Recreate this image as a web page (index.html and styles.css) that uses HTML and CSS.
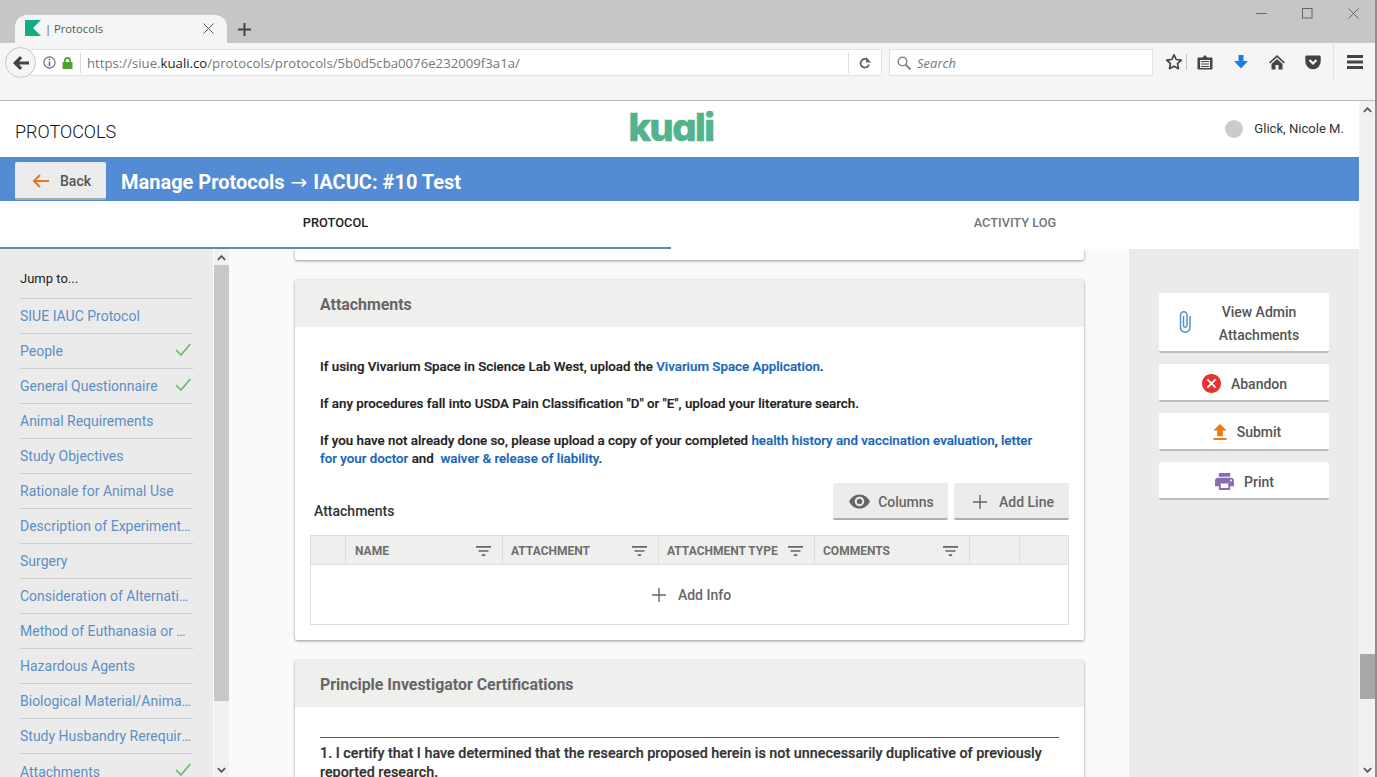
FILE: index.html
```html
<!DOCTYPE html>
<html lang="en">
<head>
<meta charset="utf-8">
<title>Protocols</title>
<link rel="stylesheet" href="styles.css">
</head>
<body>
<div class="browser">
  <div class="tabstrip">
    <div class="tab">
      <svg class="favicon" viewBox="0 0 16 16"><polygon points="0,0 16,0 8,8 16,16 0,16" fill="#12ab85"/></svg>
      <span class="tab-title">| Protocols</span>
      <svg class="tab-close" viewBox="0 0 11 11"><path d="M.5.5l10 10M10.500.5l-10 10" stroke="#555" fill="none"/></svg>
    </div>
    <svg class="tab-new" viewBox="0 0 13 13"><path d="M6.500 0v13M0 6.500h13" stroke="#444" stroke-width="2" fill="none"/></svg>
    <div class="winctl">
      <svg class="win-ico" viewBox="0 0 11 11"><path d="M0 5.500h11" stroke="#666" fill="none"/></svg>
      <svg class="win-ico" viewBox="0 0 11 11"><rect x=".5" y=".5" width="9.500" height="9.500" stroke="#666" fill="none"/></svg>
      <svg class="win-ico" viewBox="0 0 11 11"><path d="M.5.5l10 10M10.500.5l-10 10" stroke="#666" fill="none"/></svg>
    </div>
  </div>
  <div class="toolbar">
    <div class="backcircle">
      <svg class="back-ico" viewBox="0 0 16 14"><path d="M7 0l2.200 2.200L6 5.400h10v3.200H6l3.200 3.200L7 14 0 7z" fill="#444"/></svg>
    </div>
    <div class="urlbar">
      <svg class="info-ico" viewBox="0 0 14 14"><circle cx="7" cy="7" r="6" fill="none" stroke="#666" stroke-width="1.200"/><path d="M6.200 3h1.600v1.600H6.200zM6.200 6h1.600v5H6.200z" fill="#666"/></svg>
      <svg class="lock-ico" viewBox="0 0 11 12"><path d="M2 5V3.500a3.500 3.500 0 0 1 7 0V5h1.500v7H.5V5zm1.700 0h3.600V3.500a1.800 1.800 0 0 0-3.600 0z" fill="#4ea22f"/></svg>
      <span class="vsep"></span>
      <span class="url">https://siue.<b class="url-host">kuali.co</b>/protocols/protocols/5b0d5cba0076e232009f3a1a/</span>
      <span class="vsep vsep-r"></span>
      <svg class="reload-ico" viewBox="0 0 12 12"><path d="M10 7.500A4.300 4.300 0 1 1 8.700 3" fill="none" stroke="#666" stroke-width="1.800"/><path d="M7 0v5.500h5.200z" fill="#666"/></svg>
    </div>
    <div class="searchbar">
      <svg class="search-ico" viewBox="0 0 14 14"><circle cx="5.500" cy="5.500" r="4.300" fill="none" stroke="#888" stroke-width="1.600"/><path d="M8.500 8.500l5 5" stroke="#888" stroke-width="2"/></svg>
      <span class="search-text">Search</span>
    </div>
    <div class="tools">
      <svg class="tool t-star" viewBox="0 0 18 18"><path d="M9 1.800l2.200 4.700 5.100.6-3.800 3.500 1 5.100L9 13.200l-4.500 2.500 1-5.100L1.700 7.100l5.100-.6z" fill="none" stroke="#444" stroke-width="1.700" stroke-linejoin="round"/></svg>
      <span class="tool-sep"></span>
      <svg class="tool t-clip" viewBox="0 0 16 16"><path d="M1.500 3.500h4L8 1l2.500 2.500h4a1 1 0 0 1 1 1v10a1 1 0 0 1-1 1h-13a1 1 0 0 1-1-1v-10a1 1 0 0 1 1-1z" fill="#444"/><path d="M3 6h10v8H3z" fill="#f5f5f5"/><path d="M4 7.500h8M4 10h8M4 12.500h8" stroke="#444" fill="none"/></svg>
      <svg class="tool t-down" viewBox="0 0 16 16"><path d="M5.500 1h5v6H15l-7 7.500L1 7h4.500z" fill="#1a7fe0"/></svg>
      <svg class="tool t-home" viewBox="0 0 16 16"><path d="M8 1L0 8.500 1.200 9.600 8 3.300l6.800 6.300L16 8.500z" fill="#444"/><path d="M2.500 10L8 5l5.500 5v5.500H9.500V11h-3v4.500h-4z" fill="#444"/></svg>
      <svg class="tool t-pocket" viewBox="0 0 16 16"><path d="M1.500 1.500h13A1.200 1.200 0 0 1 15.700 2.700V7.500a7.700 7.700 0 0 1-15.400 0V2.700A1.200 1.200 0 0 1 1.500 1.500z" fill="#444"/><path d="M4.500 6L8 9.500 11.500 6" fill="none" stroke="#f5f5f5" stroke-width="2.200"/></svg>
      <span class="tool-sep tool-sep-long"></span>
      <svg class="tool t-menu" viewBox="0 0 16 14"><path d="M0 0h16v3H0zM0 5.500h16v3H0zM0 11h16v3H0z" fill="#444"/></svg>
    </div>
  </div>
</div>

<div class="viewport">
  <div class="page">
    <header class="apphead">
      <div class="appname">PROTOCOLS</div>
      <div class="logo">kuali</div>
      <div class="user"><span class="avatar"></span><span class="username">Glick, Nicole M.</span></div>
    </header>
    <div class="titlebar">
      <button class="backbtn">
        <svg class="backbtn-ico" viewBox="0 0 16 14"><path d="M7 1L1 7l6 6M1 7h15" fill="none" stroke="#e5762a" stroke-width="2"/></svg>
        <span>Back</span>
      </button>
      <h1 class="title">Manage Protocols <span class="title-arrow">→</span> IACUC: #10 Test</h1>
    </div>
    <nav class="tabs">
      <div class="pagetab pagetab-active">PROTOCOL</div>
      <div class="pagetab">ACTIVITY LOG</div>
    </nav>
    <div class="workspace">
      <aside class="sidebar">
        <div class="jump">Jump to...</div>
        <a class="navitem"><span class="navtext">SIUE IAUC Protocol</span></a>
        <a class="navitem"><span class="navtext">People</span><svg class="check" viewBox="0 0 16 13"><path d="M1 7l5 5L15.300 1" fill="none" stroke="#66bb5e" stroke-width="1.600"/></svg></a>
        <a class="navitem"><span class="navtext">General Questionnaire</span><svg class="check" viewBox="0 0 16 13"><path d="M1 7l5 5L15.300 1" fill="none" stroke="#66bb5e" stroke-width="1.600"/></svg></a>
        <a class="navitem"><span class="navtext">Animal Requirements</span></a>
        <a class="navitem"><span class="navtext">Study Objectives</span></a>
        <a class="navitem"><span class="navtext">Rationale for Animal Use</span></a>
        <a class="navitem"><span class="navtext">Description of Experimental Design</span></a>
        <a class="navitem"><span class="navtext">Surgery</span></a>
        <a class="navitem"><span class="navtext">Consideration of Alternatives</span></a>
        <a class="navitem"><span class="navtext">Method of Euthanasia or Disposition</span></a>
        <a class="navitem"><span class="navtext">Hazardous Agents</span></a>
        <a class="navitem"><span class="navtext">Biological Material/Animal Products</span></a>
        <a class="navitem"><span class="navtext">Study Husbandry Rerequirements</span></a>
        <a class="navitem"><span class="navtext">Attachments</span><svg class="check" viewBox="0 0 16 13"><path d="M1 7l5 5L15.300 1" fill="none" stroke="#66bb5e" stroke-width="1.600"/></svg></a>
      </aside>
      <div class="scrollbar scrollbar-side">
        <svg class="sb-arrow" viewBox="0 0 10 6"><path d="M1 5l4-4 4 4" fill="none" stroke="#555" stroke-width="2"/></svg>
        <div class="sb-thumb sb-thumb-side"></div>
        <svg class="sb-arrow sb-arrow-end" viewBox="0 0 10 6"><path d="M1 1l4 4 4-4" fill="none" stroke="#555" stroke-width="2"/></svg>
      </div>
      <main class="content">
        <section class="card card-stub"></section>
        <section class="card">
          <h2 class="card-head">Attachments</h2>
          <div class="card-body">
            <p class="note">If using Vivarium Space in Science Lab West, upload the <a class="link">Vivarium Space Application</a>.</p>
            <p class="note">If any procedures fall into USDA Pain Classification "D" or "E", upload your literature search.</p>
            <p class="note">If you have not already done so, please upload a copy of your completed <a class="link">health history and vaccination evaluation</a>, <a class="link">letter for your doctor</a> and &nbsp;<a class="link">waiver &amp; release of liability</a>.</p>
            <div class="tablehead">
              <span class="tablelabel">Attachments</span>
              <div class="tablebtns">
                <button class="greybtn">
                  <svg class="eye-ico" viewBox="1 4 22 16"><path d="M12 4.500C7 4.500 2.730 7.610 1 12c1.730 4.390 6 7.500 11 7.500s9.270-3.110 11-7.500c-1.730-4.390-6-7.500-11-7.500zM12 17c-2.760 0-5-2.240-5-5s2.240-5 5-5 5 2.240 5 5-2.240 5-5 5zm0-8c-1.660 0-3 1.340-3 3s1.340 3 3 3 3-1.340 3-3-1.340-3-3-3z" fill="#666"/></svg>
                  <span>Columns</span>
                </button>
                <button class="greybtn greybtn-add">
                  <svg class="plus-ico" viewBox="0 0 14 14"><path d="M7 0v14M0 7h14" stroke="#666" stroke-width="1.400" fill="none"/></svg>
                  <span>Add Line</span>
                </button>
              </div>
            </div>
            <div class="grid">
              <div class="grid-row">
                <div class="gh gh-blank"></div>
                <div class="gh"><span>NAME</span><svg class="filter-ico" viewBox="3 6 18 12"><path d="M10 18h4v-2h-4v2zM3 6v2h18V6H3zm3 7h12v-2H6v2z" fill="#666"/></svg></div>
                <div class="gh"><span>ATTACHMENT</span><svg class="filter-ico" viewBox="3 6 18 12"><path d="M10 18h4v-2h-4v2zM3 6v2h18V6H3zm3 7h12v-2H6v2z" fill="#666"/></svg></div>
                <div class="gh"><span>ATTACHMENT TYPE</span><svg class="filter-ico" viewBox="3 6 18 12"><path d="M10 18h4v-2h-4v2zM3 6v2h18V6H3zm3 7h12v-2H6v2z" fill="#666"/></svg></div>
                <div class="gh"><span>COMMENTS</span><svg class="filter-ico" viewBox="3 6 18 12"><path d="M10 18h4v-2h-4v2zM3 6v2h18V6H3zm3 7h12v-2H6v2z" fill="#666"/></svg></div>
                <div class="gh gh-blank"></div>
                <div class="gh gh-blank"></div>
              </div>
              <div class="grid-empty">
                <svg class="plus-ico" viewBox="0 0 14 14"><path d="M7 0v14M0 7h14" stroke="#666" stroke-width="1.400" fill="none"/></svg>
                <span>Add Info</span>
              </div>
            </div>
          </div>
        </section>
        <section class="card card-last">
          <h2 class="card-head">Principle Investigator Certifications</h2>
          <div class="card-body card-body-cert">
            <p class="cert">1. I certify that I have determined that the research proposed herein is not unnecessarily duplicative of previously reported research.</p>
          </div>
        </section>
      </main>
      <aside class="rail">
        <button class="railbtn railbtn-tall">
          <svg class="clip-ico" viewBox="7 1 11.500 22"><path d="M16.500 6v11.500c0 2.210-1.790 4-4 4s-4-1.790-4-4V5c0-1.380 1.120-2.500 2.500-2.500s2.500 1.120 2.500 2.500v10.500c0 .55-.45 1-1 1s-1-.45-1-1V6H10v9.500c0 1.380 1.120 2.500 2.500 2.500s2.500-1.120 2.500-2.500V5c0-2.210-1.790-4-4-4S7 2.790 7 5v12.500c0 3.040 2.460 5.500 5.500 5.500s5.500-2.460 5.500-5.500V6h-1.500z" fill="#5b92c9"/></svg>
          <span class="railbtn-wrap">View Admin Attachments</span>
        </button>
        <button class="railbtn">
          <svg class="abandon-ico" viewBox="2 2 20 20"><path d="M12 2C6.470 2 2 6.470 2 12s4.470 10 10 10 10-4.470 10-10S17.530 2 12 2zm5 13.590L15.590 17 12 13.410 8.410 17 7 15.590 10.590 12 7 8.410 8.410 7 12 10.590 15.590 7 17 8.410 13.410 12 17 15.590z" fill="#e23636"/></svg>
          <span>Abandon</span>
        </button>
        <button class="railbtn railbtn-submit">
          <svg class="submit-ico" viewBox="5 3 14 17"><path d="M9 16h6v-6h4l-7-7-7 7h4zm-4 2h14v2H5z" fill="#ee7a16"/></svg>
          <span>Submit</span>
        </button>
        <button class="railbtn">
          <svg class="print-ico" viewBox="2 3 20 18"><path d="M19 8H5c-1.660 0-3 1.340-3 3v6h4v4h12v-4h4v-6c0-1.660-1.340-3-3-3zm-3 11H8v-5h8v5zm3-7c-.55 0-1-.45-1-1s.45-1 1-1 1 .45 1 1-.45 1-1 1zm-1-9H6v4h12V3z" fill="#8a6bb1"/></svg>
          <span>Print</span>
        </button>
      </aside>
    </div>
  </div>
  <div class="scrollbar scrollbar-page">
    <svg class="sb-arrow" viewBox="0 0 10 6"><path d="M1 5l4-4 4 4" fill="none" stroke="#555" stroke-width="2"/></svg>
    <div class="sb-thumb sb-thumb-page"></div>
    <svg class="sb-arrow sb-arrow-end" viewBox="0 0 10 6"><path d="M1 1l4 4 4-4" fill="none" stroke="#555" stroke-width="2"/></svg>
  </div>
</div>
</body>
</html>
```
FILE: styles.css
```css
* { box-sizing: border-box; }
html, body { margin: 0; height: 777px; overflow: hidden; background: #fff; }
body { font-family: Roboto, "Liberation Sans", sans-serif; color: #333; border-right: 2px solid #8a8f96; display: flex; flex-direction: column; }
button { font-family: inherit; cursor: pointer; }
h1, h2, p { margin: 0; }

/* browser chrome */
.browser { flex: none; height: 101px; background: #f5f5f5; border-bottom: 1px solid #bcbcbc; font-family: "Open Sans", sans-serif; }
.tabstrip { height: 43px; background: #c6c6c6; display: flex; align-items: flex-end; padding-left: 15px; }
.tab { width: 212px; height: 28px; background: #f5f5f5; border-radius: 12px 12px 0 0; display: flex; align-items: center; padding: 0 13px 2px 10px; }
.favicon { width: 16px; height: 16px; flex: none; }
.tab-title { flex: 1; font-size: 11.200px; color: #555; margin-left: 4px; }
.tab-close { width: 11px; height: 11px; }
.tab-new { width: 13px; height: 13px; margin: 0 0 7px 11px; }
.winctl { margin-left: auto; align-self: flex-start; display: flex; gap: 35px; padding: 8px 16px 0 0; }
.win-ico { width: 11px; height: 11px; }
.toolbar { height: 57px; display: flex; align-items: flex-start; padding: 6px 0 0 5px; position: relative; }
.backcircle { width: 31px; height: 31px; margin-top: -2px; border-radius: 50%; border: 1px solid #c8c8c8; background: #f5f5f5; display: flex; align-items: center; justify-content: center; flex: none; position: relative; z-index: 1; }
.back-ico { width: 16px; height: 14px; }
.urlbar { width: 852px; height: 27px; margin-left: -6px; background: #fff; border: 1px solid #e2e2e2; display: flex; align-items: center; padding-left: 12px; }
.info-ico { width: 13px; height: 13px; flex: none; }
.lock-ico { width: 11px; height: 12px; flex: none; margin-left: 6px; }
.vsep { width: 1px; height: 20px; background: #dcdcdc; margin-left: 7px; flex: none; }
.url { font-size: 13.200px; color: #777; margin-left: 6px; flex: 1; white-space: nowrap; }
.url-host { color: #222; font-weight: 400; }
.vsep-r { margin: 0 10px 0 0; }
.reload-ico { width: 12px; height: 12px; margin-right: 10px; flex: none; }
.searchbar { width: 264px; height: 27px; margin-left: 7px; background: #fff; border: 1px solid #e2e2e2; display: flex; align-items: center; padding-left: 7px; }
.search-ico { width: 14px; height: 14px; }
.search-text { font-size: 13px; font-style: italic; color: #777; margin-left: 6px; }
.tools { flex: 1; position: relative; height: 30px; display: flex; align-items: center; padding-left: 12px; margin-top: -2px; }
.tool { flex: none; }
.tool-sep { width: 1px; height: 16px; background: #c4c4c4; margin: 0 10px 0 3px; flex: none; }
.tool-sep-long { height: 36px; margin: 0 13px 0 12px; background: #e0e0e0; }
.t-star { width: 18px; height: 18px; }
.t-clip { width: 16px; height: 16px; }
.t-down { width: 16px; height: 16px; margin-left: 20px; }
.t-home { width: 16px; height: 16px; margin-left: 20px; }
.t-pocket { width: 16px; height: 16px; margin-left: 20px; }
.t-menu { width: 16px; height: 14px; }

/* layout */
.viewport { flex: 1; min-height: 0; display: flex; }
.page { flex: 1; min-width: 0; display: flex; flex-direction: column; }
.scrollbar { flex: none; background: #f1f1f1; display: flex; flex-direction: column; align-items: center; }
.scrollbar-page { width: 16px; border-left: 1px solid #f7f7f7; }
.scrollbar-side { width: 16px; border-left: 1px solid #fafafa; }
.sb-arrow { width: 9px; height: 6px; margin-top: 6px; flex: none; }
.sb-arrow-end { margin: auto 0 4px; }
.sb-thumb { width: 100%; flex: none; }
.sb-thumb-side { height: 436px; background: #c8c8c8; margin-top: 4px; }
.sb-thumb-page { height: 45px; background: #a8a8a8; margin-top: 541px; }

.apphead { flex: none; height: 56px; background: #fff; display: grid; grid-template-columns: 1fr auto 1fr; align-items: center; padding: 0 15px; }
.appname { font-size: 18px; font-weight: 300; color: #111; padding-top: 5px; }
.logo { font-family: Inter, sans-serif; font-weight: 800; font-size: 38px; line-height: 40px; color: #52b38d; letter-spacing: -1.500px; margin: 0 0 5px -17px; font-feature-settings: "cv11" 1; -webkit-text-stroke: .6px #52b38d; }
.user { justify-self: end; display: flex; align-items: center; gap: 11px; font-size: 13.100px; color: #333; padding-bottom: 1px; }
.avatar { width: 18px; height: 18px; border-radius: 50%; background: #cbcbcb; }
.titlebar { flex: none; height: 44px; background: #548bd5; display: flex; align-items: center; padding-left: 15px; }
.backbtn { width: 91px; height: 38px; margin-top: 4px; border: 0; border-bottom: 2px solid #a9a9a9; border-radius: 2px; background: #ececec; display: flex; align-items: center; padding: 1px 0 0 18px; gap: 11px; font-size: 14px; font-weight: 500; color: #555; }
.backbtn-ico { width: 16px; height: 14px; }
.title { font-size: 20px; font-weight: 700; color: #fff; margin-left: 15px; padding-top: 6px; }
.title-arrow { font-family: "DejaVu Sans", sans-serif; font-weight: 400; margin: 0 1px; }
.tabs { flex: none; height: 48px; background: #fff; display: flex; }
.pagetab { flex: 1; display: flex; align-items: center; justify-content: center; font-size: 12.800px; font-weight: 500; color: #757575; padding-bottom: 5px; }
.pagetab-active { flex: none; width: 671px; color: #222; border-bottom: 2px solid #5d8cb1; padding-bottom: 3px; }

.workspace { flex: 1; min-height: 0; display: flex; overflow: hidden; }
.sidebar { flex: none; width: 213px; background: #ebebeb; padding: 15px 20px 0; overflow: hidden; }
.jump { height: 35px; border-bottom: 1px solid #cdcdcd; font-size: 13px; color: #222; line-height: 30px; }
.navitem { height: 35px; border-bottom: 1px solid #cdcdcd; display: flex; align-items: center; font-size: 14px; color: #5d8fc4; gap: 4px; padding-right: 2px; }
.navitem:last-child { border-bottom: 0; }
.navtext { flex: 1; min-width: 0; white-space: nowrap; overflow: hidden; text-overflow: ellipsis; }
.check { width: 16px; height: 13px; flex: none; margin-top: -4px; }

.content { flex: none; width: 900px; background: #fafafa; padding: 0 45px 0 66px; overflow: hidden; display: flex; flex-direction: column; gap: 20px; }
.card { flex: none; background: #fff; box-shadow: 0 1px 3px rgba(0,0,0,.4); border-radius: 2px; }
.card-stub { height: 11px; border-radius: 0 0 2px 2px; }
.card-head { height: 47px; background: #efefed; padding-left: 25px; font-size: 15.900px; font-weight: 700; color: #666; line-height: 50px; }
.card-body { padding: 31px 15px 15px 15px; }
.note { font-size: 13.330px; font-weight: 500; line-height: 18px; color: #222; margin: 0 20px 19px 10px; -webkit-text-stroke: .2px #222; }
.link { color: #1565b8; -webkit-text-stroke: .2px #1565b8; }
.tablehead { display: flex; justify-content: space-between; align-items: flex-end; margin-top: -4px; }
.tablelabel { font-size: 14px; font-weight: 500; color: #333; margin: 0 0 0 4px; padding-bottom: 1px; }
.tablebtns { display: flex; gap: 6px; }
.greybtn { width: 115px; height: 37px; border: 0; border-bottom: 2px solid #aeaeae; border-radius: 2px; background: #ececec; display: flex; align-items: center; justify-content: center; gap: 8px; padding: 2px 0 0 2px; font-size: 14px; font-weight: 500; color: #666; }
.greybtn-add { gap: 12px; padding-left: 4px; }
.eye-ico { width: 21px; height: 15px; }
.plus-ico { width: 14px; height: 14px; flex: none; }
.grid { margin-top: 15px; border: 1px solid #dedede; }
.grid-row { height: 29px; background: #efefed; display: grid; grid-template-columns: 34px 157px 156px 156px 155px 50px 1fr; border-bottom: 1px solid #dedede; }
.gh { display: flex; align-items: center; justify-content: space-between; border-left: 1px solid #dedede; padding: 1px 11px 0 8px; font-size: 12px; font-weight: 700; color: #6e6e6e; }
.gh:first-child { border-left: 0; }
.gh:nth-child(2) { padding-left: 9px; }
.filter-ico { width: 15px; height: 10px; flex: none; }
.grid-empty { height: 59px; display: flex; align-items: center; justify-content: center; gap: 12px; padding-left: 4px; font-size: 14px; font-weight: 500; color: #666; }
.card-last { height: 200px; }
.card-body-cert { padding: 30px 25px 0; }
.cert { border-top: 1px solid #555; padding-top: 6px; font-size: 14.350px; font-weight: 500; line-height: 19px; color: #333; -webkit-text-stroke: .2px #333; }

.rail { flex: 1; min-width: 0; background: #ebebeb; padding: 44px 30px 0; display: flex; flex-direction: column; gap: 11px; }
.railbtn { width: 170px; height: 38px; flex: none; border: 0; border-bottom: 2px solid #bdbdbd; border-radius: 2px; background: #fff; display: flex; align-items: center; justify-content: center; gap: 10px; padding: 3px 0 0 1px; font-size: 14px; font-weight: 500; color: #555; }
.railbtn-tall { height: 60px; line-height: 23px; justify-content: flex-start; padding: 4px 20px 0; }
.railbtn-submit { padding: 1px 0 0 6px; }
.railbtn-wrap { flex: 1; text-align: center; padding-left: 9px; padding-right: 2px; }
.clip-ico { width: 13px; height: 22px; flex: none; margin-top: -4px; }
.abandon-ico { width: 19px; height: 19px; }
.submit-ico { width: 14px; height: 16px; }
.print-ico { width: 19px; height: 17px; }
```
